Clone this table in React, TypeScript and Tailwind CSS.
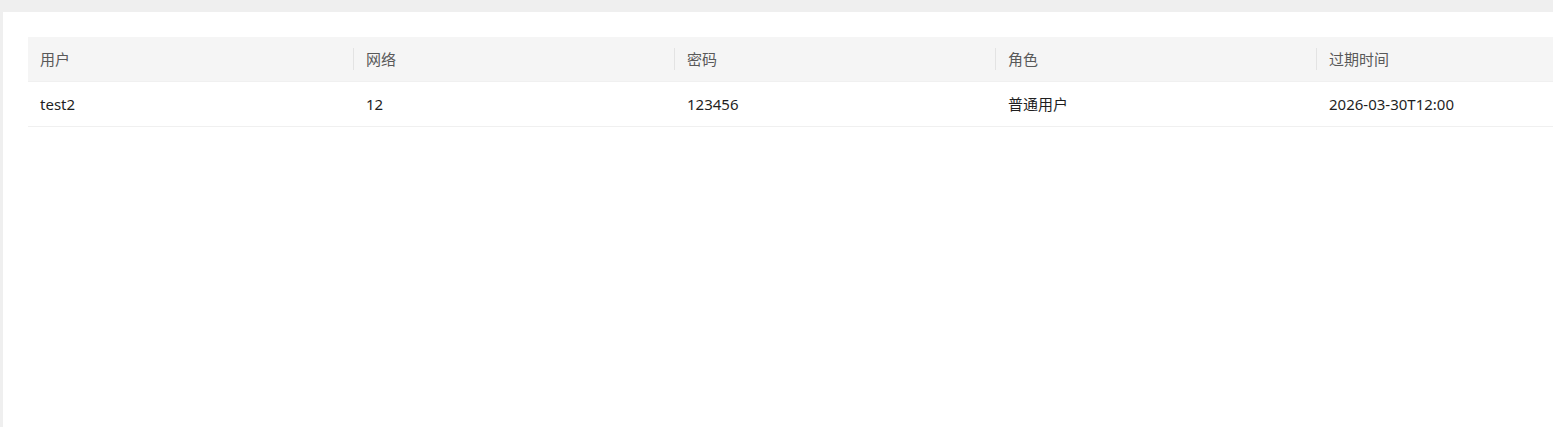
import React from "react";

const cols = [
  { title: "用户", value: "test2", w: "w-[326px]" },
  { title: "网络", value: "12", w: "w-[321px]" },
  { title: "密码", value: "123456", w: "w-[321px]" },
  { title: "角色", value: "普通用户", w: "w-[321px]" },
  { title: "过期时间", value: "2026-03-30T12:00", w: "w-[321px]" },
];

export default function App() {
  return (
    <div
      className="h-[427px] w-[1553px] overflow-hidden bg-[#efefef] pt-[12px] pl-[3px]"
      style={{ fontFamily: '"Noto Sans", "Noto Sans CJK SC", sans-serif' }}
    >
      <div className="h-full overflow-hidden bg-white pt-[25px] pl-[25px]">
        <div className="flex w-[1610px] flex-col text-[15px]">
          <div className="flex h-[45px] border-b border-[#f0f0f0] bg-[#f5f5f5]">
            {cols.map((c, i) => (
              <div
                key={c.title}
                className={`relative flex shrink-0 items-center px-3 text-[#595959] ${c.w}`}
              >
                {c.title}
                {i < cols.length - 1 && (
                  <span className="absolute right-0 top-1/2 h-[22px] w-px -translate-y-1/2 bg-[#e3e3e3]" />
                )}
              </div>
            ))}
          </div>
          <div className="flex h-[45px] border-b border-[#f0f0f0]">
            {cols.map((c) => (
              <div
                key={c.title}
                className={`flex shrink-0 items-center px-3 text-[#1f1f1f] ${c.w}`}
              >
                {c.value}
              </div>
            ))}
          </div>
        </div>
      </div>
    </div>
  );
}
